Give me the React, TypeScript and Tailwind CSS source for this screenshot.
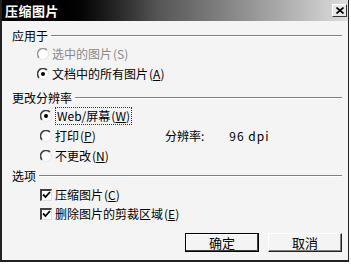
import React from "react";

const font = { fontFamily: '"Noto Sans CJK SC", "Liberation Sans", sans-serif' };

function Radio({ checked, disabled }: { checked?: boolean; disabled?: boolean }) {
  const dark = disabled ? "#9a9a9a" : "#404040";
  return (
    <svg width="12" height="12" viewBox="0 0 12 12" className="shrink-0">
      <circle cx="6" cy="6" r="5.5" fill="#ffffff" />
      <path d="M9.9 2.1 A5.5 5.5 0 0 0 2.1 9.9" fill="none" stroke={dark} strokeWidth="1.6" />
      <path d="M2.1 9.9 A5.5 5.5 0 0 0 9.9 2.1" fill="none" stroke="#e8e8e8" strokeWidth="1.2" />
      {checked && <circle cx="6" cy="6" r="2" fill="#000000" />}
    </svg>
  );
}

function Check() {
  return (
    <span className="w-[12px] h-[12px] shrink-0 bg-white border-t-2 border-l-2 border-t-[#404040] border-l-[#404040] border-b border-r border-b-[#e0e0e0] border-r-[#e0e0e0] flex items-center justify-center">
      <svg width="9" height="8" viewBox="0 0 9 8">
        <path d="M1 3.5 L3.5 6 L8 1" fill="none" stroke="#000" strokeWidth="1.8" />
      </svg>
    </span>
  );
}

function GroupHeader({ label }: { label: string }) {
  return (
    <div className="flex items-center h-[16px] gap-[3px]">
      <span className="text-[12px] leading-none">{label}</span>
      <div className="flex-1 h-[2px] border-t border-t-[#808080] border-b border-b-white" />
    </div>
  );
}

function Key({ k }: { k: string }) {
  return (
    <span className="ml-[1px]">
      (<span className="underline underline-offset-1">{k}</span>)
    </span>
  );
}

export default function App() {
  return (
    <div className="w-[351px] h-[264px] bg-white" style={font}>
      <div className="w-[349px] h-[262px] flex flex-col bg-[#f4f4f4] border-l-2 border-r border-b-2 border-[#222] text-black">
        {/* title bar */}
        <div className="h-[21px] flex items-center justify-between pl-[3px] pr-[1px] bg-linear-to-r from-black from-[15%] via-[#555] via-[45%] to-[#dedede]">
          <span className="text-white text-[13px] font-bold leading-none tracking-[0.5px]">压缩图片</span>
          <div className="w-[15px] h-[13px] bg-[#e8e8e8] border border-t-white border-l-white border-r-[#333] border-b-[#333] flex items-center justify-center">
            <svg width="8" height="7" viewBox="0 0 8 7">
              <path d="M0.5 0.5 L7.5 6.5 M7.5 0.5 L0.5 6.5" stroke="#000" strokeWidth="1.6" />
            </svg>
          </div>
        </div>

        <div className="flex flex-col pl-[10px] pr-[6px]">
          {/* 应用于 */}
          <div className="mt-[7px]">
            <GroupHeader label="应用于" />
          </div>
          <div className="flex flex-col pl-[25px] text-[12px]">
            <div className="h-[20px] flex items-center gap-[3px] text-[#8a8a8a]">
              <Radio disabled />
              <span>选中的图片<span className="ml-[1px]">(S)</span></span>
            </div>
            <div className="h-[20px] flex items-center gap-[3px]">
              <Radio checked />
              <span>文档中的所有图片<Key k="A" /></span>
            </div>
          </div>

          {/* 更改分辨率 */}
          <div className="mt-[6px]">
            <GroupHeader label="更改分辨率" />
          </div>
          <div className="flex flex-col pl-[28px] text-[12px]">
            <div className="h-[20px] flex items-center gap-[3px]">
              <Radio checked />
              <span className="px-[1px] border border-dotted border-[#333] leading-[16px]">
                Web/屏幕<Key k="W" />
              </span>
            </div>
            <div className="h-[20px] flex items-center">
              <div className="w-[125px] flex items-center gap-[3px]">
                <Radio />
                <span>打印<Key k="P" /></span>
              </div>
              <span>分辨率:</span>
              <span className="ml-[25px] tracking-[1px]">96 dpi</span>
            </div>
            <div className="h-[20px] flex items-center gap-[3px]">
              <Radio />
              <span>不更改<Key k="N" /></span>
            </div>
          </div>

          {/* 选项 */}
          <div className="mt-[2px]">
            <GroupHeader label="选项" />
          </div>
          <div className="flex flex-col pl-[28px] text-[12px] mt-[1px]">
            <div className="h-[19px] flex items-center gap-[3px]">
              <Check />
              <span>压缩图片<Key k="C" /></span>
            </div>
            <div className="h-[19px] flex items-center gap-[3px]">
              <Check />
              <span>删除图片的剪裁区域<Key k="E" /></span>
            </div>
          </div>

          {/* buttons */}
          <div className="flex justify-end gap-[9px] mt-[10px] text-[13px]">
            <button className="w-[74px] h-[19px] flex items-center justify-center bg-[#f4f4f4] border border-black shadow-[inset_-1px_-1px_0_#404040,inset_1px_1px_0_#ffffff]">
              确定
            </button>
            <button className="w-[74px] h-[19px] flex items-center justify-center bg-[#f4f4f4] border border-t-white border-l-white border-r-[#222] border-b-[#222] shadow-[inset_-1px_-1px_0_#808080]">
              取消
            </button>
          </div>
        </div>
      </div>
    </div>
  );
}
